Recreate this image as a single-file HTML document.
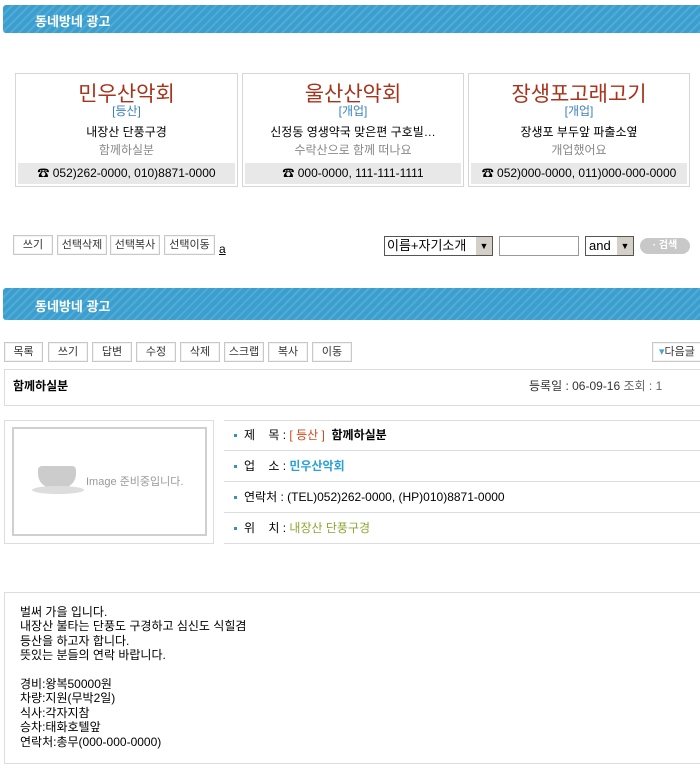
<!DOCTYPE html>
<html><head><meta charset="utf-8"><style>
*{margin:0;padding:0;box-sizing:border-box}
body{width:700px;height:768px;background:#fff;position:relative;overflow:hidden;font-family:"Liberation Sans","Noto Sans CJK KR","NanumGothic",sans-serif;font-size:12px;color:#000}
.a{position:absolute}
.bar{position:absolute;left:3px;width:697px;background:#3a9fcf;background-image:repeating-linear-gradient(135deg,rgba(255,255,255,.12) 0 2px,transparent 2px 6px);border-radius:3px 0 0 3px}
.bar span{position:absolute;left:32px;color:#fff;font-weight:bold;font-size:13px}
.card{position:absolute;top:73px;height:114px;border:1px solid #d6d6d6;text-align:center}
.card .t{position:absolute;left:0;right:0;top:4px;font-size:21px;color:#a8321a}
.card .c{position:absolute;left:0;right:0;top:28px;color:#3a7fc0;font-size:12px}
.card .l1{position:absolute;left:0;right:0;top:49px;font-size:12px;white-space:nowrap;overflow:hidden}
.card .l2{position:absolute;left:0;right:0;top:67px;color:#888;font-size:12px}
.card .p{position:absolute;left:2px;right:2px;top:89px;height:21px;background:#e8e8e8;line-height:21px;font-size:12px}
.btn{position:absolute;height:20px;border:1px solid #c8c8c8;background:#fff;font-size:11px;color:#333;text-align:center;line-height:18px;box-shadow:inset 0 0 0 1px #f3f3f3}
.row{position:absolute;left:224px;width:476px;height:31px;border-bottom:1px solid #ddd;line-height:31px;padding-left:10px;font-size:12px}
.row i{display:inline-block;width:3px;height:3px;background:#3a8fc0;vertical-align:middle;margin-right:7px}
</style></head><body>
<div class="bar" style="top:5px;height:28px"><span style="top:6px">동네방네 광고</span></div>

<div class="card" style="left:15px;width:223px"><div class="t">민우산악회</div><div class="c">[등산]</div><div class="l1">내장산 단풍구경</div><div class="l2">함께하실분</div><div class="p">☎ 052)262-0000, 010)8871-0000</div></div>
<div class="card" style="left:242px;width:222px"><div class="t">울산산악회</div><div class="c">[개업]</div><div class="l1">신정동 영생약국 맞은편 구호빌…</div><div class="l2">수락산으로 함께 떠나요</div><div class="p">☎ 000-0000, 111-111-1111</div></div>
<div class="card" style="left:468px;width:222px"><div class="t">장생포고래고기</div><div class="c">[개업]</div><div class="l1">장생포 부두앞 파출소옆</div><div class="l2">개업했어요</div><div class="p">☎ 052)000-0000, 011)000-000-0000</div></div>

<div class="btn" style="left:13px;top:235px;width:40px">쓰기</div>
<div class="btn" style="left:57px;top:235px;width:50px">선택삭제</div>
<div class="btn" style="left:110px;top:235px;width:50px">선택복사</div>
<div class="btn" style="left:164px;top:235px;width:51px">선택이동</div>
<div class="a" style="left:219px;top:242px;font-size:12px;text-decoration:underline">a</div>
<div class="a" style="left:384px;top:236px;width:109px;height:20px;border:1px solid #555;font-size:13px;line-height:18px;padding-left:2px">이름+자기소개<span style="position:absolute;right:0;top:0;width:16px;height:18px;background:#d4d0c8;font-size:9px;text-align:center">▼</span></div>
<div class="a" style="left:499px;top:236px;width:80px;height:20px;border:1px solid #999"></div>
<div class="a" style="left:585px;top:236px;width:49px;height:20px;border:1px solid #555;font-size:13px;line-height:18px;padding-left:3px">and<span style="position:absolute;right:0;top:0;width:16px;height:18px;background:#d4d0c8;font-size:9px;text-align:center">▼</span></div>
<div class="a" style="left:640px;top:238px;width:50px;height:16px;background:#c8c8c8;border-radius:8px;color:#fff;font-size:10px;font-weight:bold;text-align:center;line-height:16px">· 검색</div>

<div class="bar" style="top:288px;height:32px"><span style="top:8px">동네방네 광고</span></div>

<div class="btn" style="left:4px;top:342px;width:39px">목록</div>
<div class="btn" style="left:48px;top:342px;width:40px">쓰기</div>
<div class="btn" style="left:92px;top:342px;width:40px">답변</div>
<div class="btn" style="left:136px;top:342px;width:40px">수정</div>
<div class="btn" style="left:180px;top:342px;width:40px">삭제</div>
<div class="btn" style="left:224px;top:342px;width:40px">스크랩</div>
<div class="btn" style="left:268px;top:342px;width:40px">복사</div>
<div class="btn" style="left:312px;top:342px;width:40px">이동</div>
<div class="btn" style="left:652px;top:342px;width:50px;text-align:left;padding-left:6px"><span style="color:#4aa3d0">▾</span>다음글</div>

<div class="a" style="left:4px;top:369px;width:696px;height:37px;border-top:1px solid #ddd;border-bottom:1px solid #ddd;border-left:1px solid #ddd"></div>
<div class="a" style="left:13px;top:377px;font-weight:bold;font-size:12px">함께하실분</div>
<div class="a" style="left:529px;top:377px;font-size:12px;color:#333">등록일 : 06-09-16 <span style="color:#666">조회 : 1</span></div>

<div class="a" style="left:4px;top:420px;width:210px;height:124px;border:1px solid #ddd"></div>
<div class="a" style="left:12px;top:427px;width:195px;height:109px;border:2px solid #d0d0d0"></div>
<div class="a" style="left:38px;top:466px;width:38px;height:22px;background:#ccc;border-radius:4px 4px 14px 14px"></div>
<div class="a" style="left:32px;top:486px;width:52px;height:8px;background:#ddd;border-radius:50%"></div>
<div class="a" style="left:86px;top:473px;font-size:11px;color:#999">Image 준비중입니다.</div>

<div class="a" style="left:224px;top:420px;width:476px;border-top:1px solid #ddd"></div>
<div class="row" style="top:420px"><i></i>제 &nbsp;&nbsp;&nbsp;목 : <span style="color:#d04a1a">[ 등산 ]</span> &nbsp;<b>함께하실분</b></div>
<div class="row" style="top:451px"><i></i>업 &nbsp;&nbsp;&nbsp;소 : <b style="color:#2aa0d8">민우산악회</b></div>
<div class="row" style="top:482px"><i></i>연락처 : (TEL)052)262-0000, (HP)010)8871-0000</div>
<div class="row" style="top:513px"><i></i>위 &nbsp;&nbsp;&nbsp;치 : <span style="color:#8aa830">내장산 단풍구경</span></div>

<div class="a" style="left:4px;top:592px;width:696px;height:172px;border:1px solid #ddd;border-right:none"></div>
<div class="a" style="left:20px;top:605px;font-size:12px;line-height:14.4px">벌써 가을 입니다.<br>내장산 불타는 단풍도 구경하고 심신도 식힐겸<br>등산을 하고자 합니다.<br>뜻있는 분들의 연락 바랍니다.<br><br>경비:왕복50000원<br>차량:지원(무박2일)<br>식사:각자지참<br>승차:태화호텔앞<br>연락처:총무(000-000-0000)</div>
</body></html>
